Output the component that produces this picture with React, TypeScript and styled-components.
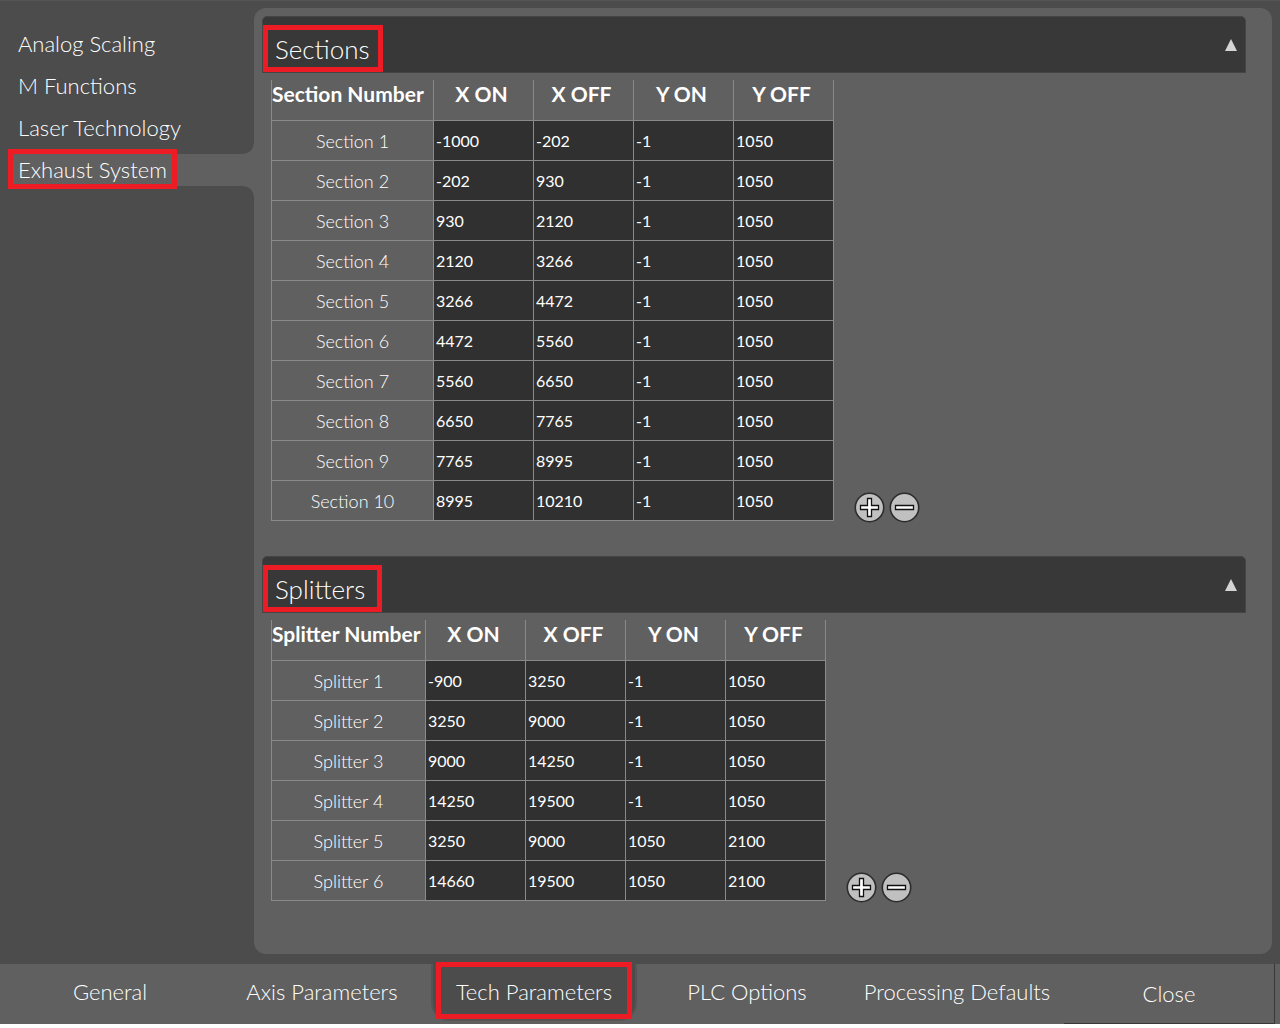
import React from "react";
import styled, { createGlobalStyle, css } from "styled-components";

const GlobalStyle = createGlobalStyle`
  *, *::before, *::after { box-sizing: border-box; }
  body { margin: 0; background: #fff; }
  button, input, table { font: inherit; color: inherit; }
`;

const marked = css`
  position: relative;
  &::after {
    content: "";
    position: absolute;
    border: 5px solid #ed1c24;
    pointer-events: none;
  }
`;

const Screen = styled.div`
  min-height: 1024px;
  display: flex;
  flex-direction: column;
  background: #4c4c4c;
  color: #fff;
  font: 300 16px/24px Lato, "Open Sans", sans-serif;
`;

const Workspace = styled.div`
  flex: 1;
  display: flex;
  padding: 7px 8px 10px 0;
  border-top: 1px solid #545454;
`;

const Sidebar = styled.nav`
  width: 254px;
  flex: none;
  display: flex;
  flex-direction: column;
  gap: 10px;
  padding: 20px 0 0 12px;
`;

const SideItem = styled.button<{ $active?: boolean }>`
  height: 32px;
  padding: 0 0 0 6px;
  border: 0;
  background: ${(p) => (p.$active ? "#606060" : "transparent")};
  font-size: 22px;
  line-height: 32px;
  text-align: left;
  white-space: nowrap;
  cursor: pointer;
  ${(p) =>
    p.$active &&
    css`
      ${marked}
      &::after {
        left: -4px;
        top: -5px;
        width: 169px;
        height: 40px;
      }
      &::before {
        content: "";
        position: absolute;
        right: 0;
        top: -10px;
        width: 10px;
        height: 52px;
        background:
          radial-gradient(circle at 0 0, transparent 9px, #606060 10px) top / 10px 10px no-repeat,
          radial-gradient(circle at 0 100%, transparent 9px, #606060 10px) bottom / 10px 10px no-repeat;
      }
    `}
`;

const Panel = styled.main`
  flex: 1;
  display: flex;
  flex-direction: column;
  gap: 35px;
  padding: 8px 26px 52px 8px;
  border-radius: 12px;
  background: #606060;
`;

const Group = styled.section`
  display: flex;
  flex-direction: column;
  gap: 7px;
`;

const GroupHeader = styled.header`
  height: 57px;
  display: flex;
  align-items: center;
  justify-content: space-between;
  padding: 0 8px 0 12px;
  border: 1px solid #454545;
  border-radius: 5px 5px 0 0;
  background: #383838;
`;

const GroupTitle = styled.h2<{ $boxWidth: number }>`
  ${marked}
  margin: 0;
  padding-top: 10px;
  font-size: 26px;
  line-height: 33px;
  font-weight: inherit;
  &::after {
    left: -12px;
    top: 2px;
    width: ${(p) => p.$boxWidth}px;
    height: 47px;
  }
`;

const Collapse = styled.button`
  display: flex;
  padding: 0;
  border: 0;
  background: none;
  cursor: pointer;
`;

const GroupBody = styled.div`
  display: flex;
  align-items: flex-end;
  gap: 20px;
  padding-left: 9px;
`;

const Grid = styled.table<{ $first: number }>`
  width: ${(p) => p.$first + 400}px;
  table-layout: fixed;
  border-collapse: separate;
  border-spacing: 0;
  th:first-child {
    width: ${(p) => p.$first}px;
    border-left: 1px solid #8a8a8a;
  }
`;

const gridLine = css`
  border: solid #8a8a8a;
  border-width: 0 1px 1px 0;
`;

const ColumnHead = styled.th`
  ${gridLine}
  height: 41px;
  padding: 1px 4px 0 0;
  font-size: 21px;
  line-height: 26px;
  font-weight: 700;
  vertical-align: top;
  white-space: nowrap;
  &:first-child {
    padding-right: 0;
    text-align: left;
  }
`;

const RowHead = styled.th`
  ${gridLine}
  height: 40px;
  padding: 0;
  font-size: 18px;
  line-height: 24px;
  font-weight: inherit;
`;

const Cell = styled.td`
  ${gridLine}
  height: 40px;
  padding: 0;
  background: #303030;
`;

const Value = styled.input`
  display: block;
  width: 100%;
  height: 39px;
  padding: 0 2px;
  border: 0;
  outline: 0;
  background: transparent;
  font-size: 16px;
  font-weight: 400;
`;

const Actions = styled.div`
  display: flex;
  gap: 4px;
  margin-bottom: -2px;
`;

const RoundButton = styled.button`
  display: flex;
  padding: 0;
  border: 0;
  background: none;
  cursor: pointer;
`;

const TabBar = styled.nav`
  height: 60px;
  display: grid;
  grid-template-columns: 220fr 204fr 220fr 206fr 214fr 211fr 5fr;
  background: #606060;
`;

const Tab = styled.button<{ $active?: boolean; $last?: boolean }>`
  height: 55px;
  padding: 0;
  border: 0;
  background: transparent;
  font-size: 22px;
  line-height: 54px;
  white-space: nowrap;
  cursor: pointer;
  ${(p) =>
    p.$last &&
    css`
      height: 60px;
      border: solid #383838;
      border-width: 0 1px 1px 0;
    `}
  ${(p) =>
    p.$active &&
    css`
      ${marked}
      justify-self: center;
      width: 206px;
      height: 57px;
      border: solid #555;
      border-width: 0 2px 2px;
      border-radius: 0 0 18px 18px;
      background: #4c4c4c;
      &::after {
        left: 3px;
        right: 3px;
        top: -2px;
        height: 57px;
      }
    `}
`;

const COLUMNS = ["X ON", "X OFF", "Y ON", "Y OFF"];

const SECTIONS = [
  [-1000, -202, -1, 1050],
  [-202, 930, -1, 1050],
  [930, 2120, -1, 1050],
  [2120, 3266, -1, 1050],
  [3266, 4472, -1, 1050],
  [4472, 5560, -1, 1050],
  [5560, 6650, -1, 1050],
  [6650, 7765, -1, 1050],
  [7765, 8995, -1, 1050],
  [8995, 10210, -1, 1050],
];

const SPLITTERS = [
  [-900, 3250, -1, 1050],
  [3250, 9000, -1, 1050],
  [9000, 14250, -1, 1050],
  [14250, 19500, -1, 1050],
  [3250, 9000, 1050, 2100],
  [14660, 19500, 1050, 2100],
];

function SignIcon({ plus }: { plus?: boolean }) {
  return (
    <svg width="31" height="31" viewBox="0 0 31 31" aria-hidden="true">
      <circle cx="15.5" cy="15.5" r="14.2" fill="#c0c0c0" stroke="#2c2c2c" strokeWidth="1.6" />
      <path
        d={plus ? "M13.5 6.5h4v7h7v4h-7v7h-4v-7h-7v-4h7z" : "M6.5 13.5h18v4h-18z"}
        fill="#fff"
        stroke="#111"
        strokeWidth="1.3"
      />
    </svg>
  );
}

interface ParameterGroupProps {
  title: string;
  unit: string;
  rows: number[][];
  firstWidth: number;
  boxWidth: number;
}

function ParameterGroup({ title, unit, rows, firstWidth, boxWidth }: ParameterGroupProps) {
  return (
    <Group>
      <GroupHeader>
        <GroupTitle $boxWidth={boxWidth}>{title}</GroupTitle>
        <Collapse aria-label={`Collapse ${title}`}>
          <svg width="12" height="12" viewBox="0 0 12 12" aria-hidden="true">
            <path d="M6 0L12 12H0z" fill="#d4d4d4" />
          </svg>
        </Collapse>
      </GroupHeader>
      <GroupBody>
        <Grid $first={firstWidth}>
          <thead>
            <tr>
              <ColumnHead scope="col">{unit} Number</ColumnHead>
              {COLUMNS.map((name) => (
                <ColumnHead scope="col" key={name}>{name}</ColumnHead>
              ))}
            </tr>
          </thead>
          <tbody>
            {rows.map((row, r) => (
              <tr key={r}>
                <RowHead scope="row">{`${unit} ${r + 1}`}</RowHead>
                {row.map((value, c) => (
                  <Cell key={c}>
                    <Value defaultValue={value} aria-label={`${unit} ${r + 1} ${COLUMNS[c]}`} />
                  </Cell>
                ))}
              </tr>
            ))}
          </tbody>
        </Grid>
        <Actions>
          <RoundButton aria-label={`Add ${unit}`}><SignIcon plus /></RoundButton>
          <RoundButton aria-label={`Remove ${unit}`}><SignIcon /></RoundButton>
        </Actions>
      </GroupBody>
    </Group>
  );
}

export default function App() {
  return (
    <Screen>
      <GlobalStyle />
      <Workspace>
        <Sidebar>
          <SideItem>Analog Scaling</SideItem>
          <SideItem>M Functions</SideItem>
          <SideItem>Laser Technology</SideItem>
          <SideItem $active>Exhaust System</SideItem>
        </Sidebar>
        <Panel>
          <ParameterGroup title="Sections" unit="Section" rows={SECTIONS} firstWidth={163} boxWidth={120} />
          <ParameterGroup title="Splitters" unit="Splitter" rows={SPLITTERS} firstWidth={155} boxWidth={119} />
        </Panel>
      </Workspace>
      <TabBar>
        <Tab>General</Tab>
        <Tab>Axis Parameters</Tab>
        <Tab $active>Tech Parameters</Tab>
        <Tab>PLC Options</Tab>
        <Tab>Processing Defaults</Tab>
        <Tab $last>Close</Tab>
      </TabBar>
    </Screen>
  );
}
